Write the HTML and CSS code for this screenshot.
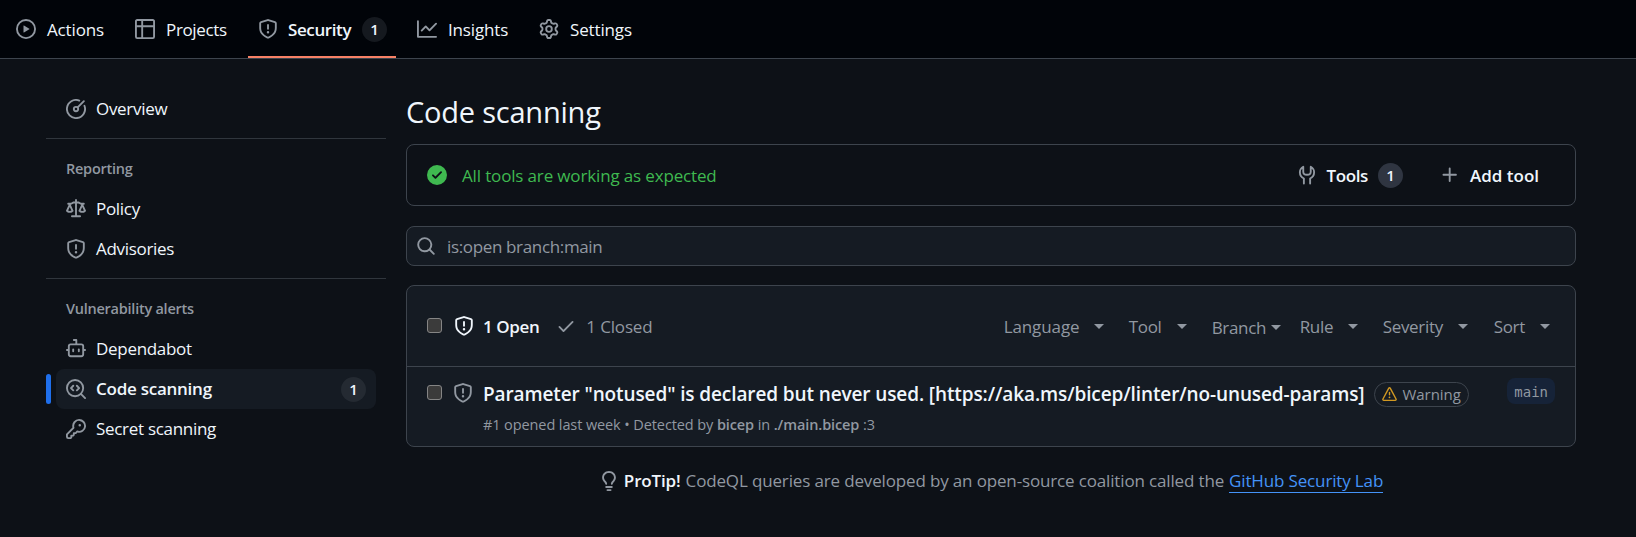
FILE: index.html
```html
<!DOCTYPE html>
<html lang="en">
<head>
<meta charset="utf-8">
<title>Code scanning</title>
<link rel="stylesheet" href="styles.css">
</head>
<body>
<svg class="sprite" aria-hidden="true">
  <symbol id="shield" viewBox="0 0 16 16"><path d="M7.467.133a1.748 1.748 0 0 1 1.066 0l5.25 1.68A1.75 1.75 0 0 1 15 3.48V7c0 1.566-.32 3.182-1.303 4.682-.983 1.498-2.585 2.813-5.032 3.855a1.697 1.697 0 0 1-1.33 0c-2.447-1.042-4.049-2.357-5.032-3.855C1.32 10.182 1 8.566 1 7V3.48a1.75 1.75 0 0 1 1.217-1.667Zm.61 1.429a.25.25 0 0 0-.153 0l-5.25 1.68a.25.25 0 0 0-.174.238V7c0 1.358.275 2.666 1.057 3.86.784 1.194 2.121 2.34 4.366 3.297a.196.196 0 0 0 .154 0c2.245-.956 3.582-2.104 4.366-3.298C13.225 9.666 13.5 8.36 13.5 7V3.48a.251.251 0 0 0-.174-.237l-5.25-1.68ZM8.75 4.75v3a.75.75 0 0 1-1.5 0v-3a.75.75 0 0 1 1.5 0ZM9 10.5a1 1 0 1 1-2 0 1 1 0 0 1 2 0Z"/></symbol>
</svg>
<header class="tabs">
  <a class="tab actions"><svg class="icon" viewBox="0 0 16 16"><path d="M8 0a8 8 0 1 1 0 16A8 8 0 0 1 8 0ZM1.5 8a6.5 6.5 0 1 0 13 0 6.5 6.5 0 0 0-13 0Zm4.879-2.773 4.264 2.559a.25.25 0 0 1 0 .428l-4.264 2.559A.25.25 0 0 1 6 10.559V5.442a.25.25 0 0 1 .379-.215Z"/></svg><span>Actions</span></a>
  <a class="tab projects"><svg class="icon" viewBox="0 0 16 16"><path d="M0 1.75C0 .784.784 0 1.75 0h12.5C15.216 0 16 .784 16 1.75v12.5A1.75 1.75 0 0 1 14.25 16H1.75A1.75 1.75 0 0 1 0 14.25ZM6.5 6.5v8h7.75a.25.25 0 0 0 .25-.25V6.5Zm8-1.5V1.75a.25.25 0 0 0-.25-.25H6.5V5Zm-13 1.5v7.75c0 .138.112.25.25.25H5v-8ZM5 5V1.5H1.75a.25.25 0 0 0-.25.25V5Z"/></svg><span>Projects</span></a>
  <a class="tab security selected"><svg class="icon"><use href="#shield"/></svg><span>Security</span><b class="count">1</b></a>
  <a class="tab insights"><svg class="icon" viewBox="0 0 16 16"><path d="M1.5 1.75V13.5h13.75a.75.75 0 0 1 0 1.5H.75a.75.75 0 0 1-.75-.75V1.75a.75.75 0 0 1 1.5 0Zm14.28 2.53-5.25 5.25a.75.75 0 0 1-1.06 0L7 7.06 4.28 9.78a.751.751 0 0 1-1.042-.018.751.751 0 0 1-.018-1.042l3.25-3.25a.75.75 0 0 1 1.06 0L10 7.94l4.72-4.72a.751.751 0 0 1 1.042.018.751.751 0 0 1 .018 1.042Z"/></svg><span>Insights</span></a>
  <a class="tab settings"><svg class="icon" viewBox="0 0 16 16"><path d="M8 0a8.2 8.2 0 0 1 .701.031C9.444.095 9.99.645 10.16 1.29l.288 1.107c.018.066.079.158.212.224.231.114.454.243.668.386.123.082.233.09.299.071l1.103-.303c.644-.176 1.392.021 1.82.63.27.385.506.792.704 1.218.315.675.111 1.422-.364 1.891l-.814.806c-.049.048-.098.147-.088.294.016.257.016.515 0 .772-.01.147.038.246.088.294l.814.806c.475.469.679 1.216.364 1.891a7.977 7.977 0 0 1-.704 1.217c-.428.61-1.176.807-1.82.63l-1.102-.302c-.067-.019-.177-.011-.3.071a5.909 5.909 0 0 1-.668.386c-.133.066-.194.158-.211.224l-.29 1.106c-.168.646-.715 1.196-1.458 1.26a8.006 8.006 0 0 1-1.402 0c-.743-.064-1.289-.614-1.458-1.26l-.289-1.106c-.018-.066-.079-.158-.212-.224a5.738 5.738 0 0 1-.668-.386c-.123-.082-.233-.09-.299-.071l-1.103.303c-.644.176-1.392-.021-1.82-.63a8.12 8.12 0 0 1-.704-1.218c-.315-.675-.111-1.422.363-1.891l.815-.806c.05-.048.098-.147.088-.294a6.214 6.214 0 0 1 0-.772c.01-.147-.038-.246-.088-.294l-.815-.806C.635 6.045.431 5.298.746 4.623a7.92 7.92 0 0 1 .704-1.217c.428-.61 1.176-.807 1.82-.63l1.102.302c.067.019.177.011.3-.071.214-.143.437-.272.668-.386.133-.066.194-.158.211-.224l.29-1.106C6.009.645 6.556.095 7.299.03 7.53.01 7.764 0 8 0Zm-.571 1.525c-.036.003-.108.036-.137.146l-.289 1.105c-.147.561-.549.967-.998 1.189-.173.086-.34.183-.5.29-.417.278-.97.423-1.529.27l-1.103-.303c-.109-.03-.175.016-.195.045-.22.312-.412.644-.573.99-.014.031-.021.11.059.19l.815.806c.411.406.562.957.53 1.456a4.709 4.709 0 0 0 0 .582c.032.499-.119 1.05-.53 1.456l-.815.806c-.081.08-.073.159-.059.19.162.346.353.677.573.989.02.03.085.076.195.046l1.102-.303c.56-.153 1.113-.008 1.53.27.161.107.328.204.501.29.447.222.85.629.997 1.189l.289 1.105c.029.109.101.143.137.146a6.6 6.6 0 0 0 1.142 0c.036-.003.108-.036.137-.146l.289-1.105c.147-.561.549-.967.998-1.189.173-.086.34-.183.5-.29.417-.278.97-.423 1.529-.27l1.103.303c.109.029.175-.016.195-.045.22-.313.411-.644.573-.99.014-.031.021-.11-.059-.19l-.815-.806c-.411-.406-.562-.957-.53-1.456a4.709 4.709 0 0 0 0-.582c-.032-.499.119-1.05.53-1.456l.815-.806c.081-.08.073-.159.059-.19a6.464 6.464 0 0 0-.573-.989c-.02-.03-.085-.076-.195-.046l-1.102.303c-.56.153-1.113.008-1.53-.27a4.44 4.44 0 0 0-.501-.29c-.447-.222-.85-.629-.997-1.189l-.289-1.105c-.029-.11-.101-.143-.137-.146a6.6 6.6 0 0 0-1.142 0ZM11 8a3 3 0 1 1-6 0 3 3 0 0 1 6 0ZM9.5 8a1.5 1.5 0 1 0-3.001.001A1.5 1.5 0 0 0 9.5 8Z"/></svg><span>Settings</span></a>
</header>
<div class="layout">
  <nav class="sidebar">
    <a class="nav-item"><svg class="icon line" viewBox="0 0 16 16"><path d="M10.6 1.25A7.25 7.25 0 1 0 14.75 5.4"/><circle cx="8" cy="8" r="1.75"/><path d="M9.3 6.7 14.3 1.7"/></svg><span>Overview</span></a>
    <hr class="rule">
    <h2 class="group">Reporting</h2>
    <a class="nav-item"><svg class="icon" viewBox="0 0 16 16"><path d="M8.75.75V2h.985c.304 0 .603.08.867.231l1.29.736c.038.022.08.033.124.033h2.234a.75.75 0 0 1 0 1.5h-.427l2.111 4.692a.75.75 0 0 1-.154.838l-.53-.53.529.531-.001.002-.002.002-.006.006-.006.005-.01.01-.045.04c-.21.176-.441.327-.686.45C14.556 10.78 13.88 11 13 11a4.498 4.498 0 0 1-2.023-.454 3.544 3.544 0 0 1-.686-.45l-.045-.04-.016-.015-.006-.006-.004-.004v-.001a.75.75 0 0 1-.154-.838L12.178 4.5h-.162c-.305 0-.604-.079-.868-.231l-1.29-.736a.245.245 0 0 0-.124-.033H8.75V13h2.5a.75.75 0 0 1 0 1.5h-6.5a.75.75 0 0 1 0-1.5h2.5V3.5h-.984a.245.245 0 0 0-.124.033l-1.289.737c-.265.15-.564.23-.869.23h-.162l2.112 4.692a.75.75 0 0 1-.154.838l-.53-.53.529.531-.001.002-.002.002-.006.006-.016.015-.045.04c-.21.176-.441.327-.686.45C4.556 10.78 3.88 11 3 11a4.498 4.498 0 0 1-2.023-.454 3.544 3.544 0 0 1-.686-.45l-.045-.04-.016-.015-.006-.006-.004-.004v-.001a.75.75 0 0 1-.154-.838L2.178 4.5H1.75a.75.75 0 0 1 0-1.5h2.234a.249.249 0 0 0 .125-.033l1.288-.737c.265-.15.564-.23.869-.23h.984V.75a.75.75 0 0 1 1.5 0Zm2.945 8.477c.285.135.718.273 1.305.273s1.02-.138 1.305-.273L13 6.327Zm-10 0c.285.135.718.273 1.305.273s1.02-.138 1.305-.273L3 6.327Z"/></svg><span>Policy</span></a>
    <a class="nav-item"><svg class="icon"><use href="#shield"/></svg><span>Advisories</span></a>
    <hr class="rule">
    <h2 class="group">Vulnerability alerts</h2>
    <a class="nav-item"><svg class="icon" viewBox="0 0 16 16"><path d="M5.75 7.5a.75.75 0 0 1 .75.75v1.5a.75.75 0 0 1-1.5 0v-1.5a.75.75 0 0 1 .75-.75Zm5.25.75a.75.75 0 0 0-1.5 0v1.5a.75.75 0 0 0 1.5 0v-1.5ZM6.25 0h2A.75.75 0 0 1 9 .75V3.5h3.25a2.25 2.25 0 0 1 2.25 2.25V8h.75a.75.75 0 0 1 0 1.5h-.75v2.75a2.25 2.25 0 0 1-2.25 2.25h-8.5a2.25 2.25 0 0 1-2.25-2.25V9.5H.75a.75.75 0 0 1 0-1.5h.75V5.75A2.25 2.25 0 0 1 3.75 3.5H7.5v-2H6.25a.75.75 0 0 1 0-1.5ZM3 5.75v6.5c0 .414.336.75.75.75h8.5a.75.75 0 0 0 .75-.75v-6.5a.75.75 0 0 0-.75-.75h-8.5a.75.75 0 0 0-.75.75Z"/></svg><span>Dependabot</span></a>
    <a class="nav-item current"><svg class="icon line" viewBox="0 0 16 16"><circle cx="7.25" cy="7.25" r="6.5"/><path d="m11.9 11.9 3.35 3.35M5.8 5.4 4 7.25 5.800 9.100M8.700 5.400 10.500 7.250 8.700 9.100"/></svg><span>Code scanning</span><b class="count">1</b></a>
    <a class="nav-item"><svg class="icon" viewBox="0 0 16 16"><path d="M10.5 0a5.499 5.499 0 1 1-1.288 10.848l-.932.932a.749.749 0 0 1-.53.22H7v.75a.749.749 0 0 1-.22.53l-.5.5a.749.749 0 0 1-.53.22H5v.75a.749.749 0 0 1-.22.53l-.5.5a.749.749 0 0 1-.53.22h-2A1.75 1.75 0 0 1 0 14.25v-2c0-.199.079-.389.22-.53l4.932-4.932A5.5 5.5 0 0 1 10.5 0Zm-4 5.5c-.001.431.069.86.205 1.269a.75.75 0 0 1-.181.768L1.5 12.56v1.69c0 .138.112.25.25.25h1.69l.06-.06v-1.19a.75.75 0 0 1 .75-.75h1.19l.06-.06v-1.19a.75.75 0 0 1 .75-.75h1.19l1.023-1.025a.75.75 0 0 1 .768-.18A4 4 0 1 0 6.5 5.5ZM11 6a1 1 0 1 1 0-2 1 1 0 0 1 0 2Z"/></svg><span>Secret scanning</span></a>
  </nav>
  <main class="main">
    <h1 class="title">Code scanning</h1>
    <section class="status">
      <svg class="icon ok" viewBox="0 0 16 16"><path d="M8 16A8 8 0 1 1 8 0a8 8 0 0 1 0 16Zm3.78-9.72a.751.751 0 0 0-.018-1.042.751.751 0 0 0-1.042-.018L6.75 9.19 5.28 7.72a.751.751 0 0 0-1.042.018.751.751 0 0 0-.018 1.042l2 2a.75.75 0 0 0 1.06 0Z"/></svg>
      <span class="status-text">All tools are working as expected</span>
      <a class="action tools"><svg class="icon line" viewBox="0 0 16 16"><path d="M5.500 14.800v-4C3.500 9.800 2.300 8.100 2.300 5.800c0-1.900 1-3.400 2.700-4.400v3.900c0 1.600 1.300 2.500 3 2.500s3-.900 3-2.500V1.400c1.700 1 2.700 2.500 2.700 4.400 0 2.300-1.200 4-3.200 5v4"/></svg><span>Tools</span><b class="count">1</b></a>
      <a class="action add"><svg class="icon" viewBox="0 0 16 16"><path d="M7.75 2a.75.75 0 0 1 .75.75V7h4.25a.75.75 0 0 1 0 1.5H8.5v4.25a.75.75 0 0 1-1.5 0V8.5H2.75a.75.75 0 0 1 0-1.5H7V2.75A.75.75 0 0 1 7.75 2Z"/></svg><span>Add tool</span></a>
    </section>
    <div class="search"><svg class="icon" viewBox="0 0 16 16"><path d="M10.68 11.74a6 6 0 0 1-7.922-8.982 6 6 0 0 1 8.982 7.922l3.04 3.04a.749.749 0 0 1-.326 1.275.749.749 0 0 1-.734-.215ZM11.5 7a4.499 4.499 0 1 0-8.997 0A4.499 4.499 0 0 0 11.5 7Z"/></svg><span>is:open branch:main</span></div>
    <section class="alerts">
      <div class="alerts-head">
        <i class="box"></i>
        <svg class="icon bright"><use href="#shield"/></svg><span class="open">1 Open</span>
        <svg class="icon check" viewBox="0 0 16 16"><path d="M13.78 4.22a.75.75 0 0 1 0 1.06l-7.25 7.25a.75.75 0 0 1-1.060 0L2.220 9.280a.751.751 0 0 1 .018-1.042.751.751 0 0 1 1.042-.018L6 10.940l6.720-6.720a.75.75 0 0 1 1.060 0Z"/></svg><span class="closed">1 Closed</span>
        <div class="filters">
          <span class="filter f-language">Language</span><span class="filter f-tool">Tool</span><span class="filter f-branch">Branch</span><span class="filter f-rule">Rule</span><span class="filter f-severity">Severity</span><span class="filter f-sort">Sort</span>
        </div>
      </div>
      <div class="alert">
        <i class="box"></i>
        <svg class="icon"><use href="#shield"/></svg>
        <div class="alert-body">
          <div class="alert-line"><a class="alert-title">Parameter "notused" is declared but never used. [https://aka.ms/bicep/linter/no-unused-params]</a><span class="warning"><svg viewBox="0 0 16 16"><path d="M6.457 1.047c.659-1.234 2.427-1.234 3.086 0l6.082 11.378A1.75 1.75 0 0 1 14.082 15H1.918a1.75 1.75 0 0 1-1.543-2.575Zm1.763.707a.25.25 0 0 0-.44 0L1.698 13.132a.25.25 0 0 0 .22.368h12.164a.25.25 0 0 0 .22-.368Zm.53 3.996v2.5a.75.75 0 0 1-1.500 0v-2.500a.75.75 0 0 1 1.500 0ZM9 11a1 1 0 1 1-2 0 1 1 0 0 1 2 0Z"/></svg><span>Warning</span></span></div>
          <div class="meta">#1 opened last week • Detected by <b>bicep</b> in <b>./main.bicep</b> :3</div>
        </div>
        <span class="branch">main</span>
      </div>
    </section>
    <p class="protip"><svg class="icon" viewBox="0 0 16 16"><path d="M8 1.5c-2.363 0-4 1.69-4 3.75 0 .984.424 1.625.984 2.304l.214.253c.223.264.47.556.673.848.284.411.537.896.621 1.49a.75.75 0 0 1-1.484.211c-.04-.282-.163-.547-.37-.847a8.456 8.456 0 0 0-.542-.68c-.084-.1-.173-.205-.268-.32C3.201 7.75 2.5 6.766 2.5 5.25 2.5 2.31 4.863 0 8 0s5.5 2.31 5.5 5.25c0 1.516-.701 2.5-1.328 3.259-.095.115-.184.22-.268.319-.207.245-.383.453-.541.681-.208.3-.33.565-.37.847a.751.751 0 0 1-1.485-.212c.084-.593.337-1.078.621-1.489.203-.292.45-.584.673-.848.075-.088.147-.173.213-.253.561-.679.985-1.32.985-2.304 0-2.06-1.637-3.75-4-3.75ZM5.75 12h4.5a.75.75 0 0 1 0 1.5h-4.5a.75.75 0 0 1 0-1.5ZM6 15.25a.75.75 0 0 1 .75-.75h2.5a.75.75 0 0 1 0 1.5h-2.5a.75.75 0 0 1-.75-.75Z"/></svg><b>ProTip!</b><span class="tip-text">CodeQL queries are developed by an open-source coalition called the</span><a class="tip-link">GitHub Security Lab</a></p>
  </main>
</div>
</body>
</html>
```
FILE: styles.css
```css
* { box-sizing: border-box; }
body {
  margin: 0;
  height: 537px;
  overflow: hidden;
  background: #0d1117;
  color: #f0f6fc;
  font: 17px/24px "Open Sans", "Noto Sans", sans-serif;
  letter-spacing: -0.15px;
  white-space: nowrap;
}
.sprite { position: absolute; width: 0; height: 0; }
.icon { width: 20px; height: 20px; flex: none; fill: #9198a1; }
.line { fill: none; stroke: #9198a1; stroke-width: 1.5; stroke-linecap: round; stroke-linejoin: round; }
b { font-weight: 600; }
.count {
  flex: none;
  width: 25px;
  height: 25px;
  border-radius: 50%;
  background: #15191f;
  font-size: 15px;
  line-height: 25px;
  letter-spacing: 0;
  text-align: center;
}

.tabs { display: flex; height: 59px; padding-left: 6px; background: #010409; border-bottom: 1px solid #3d444d; }
.tab { display: flex; align-items: center; height: 58px; padding: 0 10px; }
.tab span { margin-left: 11px; padding-top: 2px; }
.actions { width: 119px; }
.projects { width: 123px; letter-spacing: -0.35px; }
.security { width: 148px; letter-spacing: -0.4px; }
.insights { width: 122px; margin-left: 10px; padding-left: 11px; }
.settings { padding-left: 11px; }
.selected { font-weight: 600; box-shadow: inset 0 -2px #f78166; }
.security span { margin-left: 10px; }
.security .count { margin-left: auto; }
.security { padding-right: 9px; }

.layout { display: flex; padding-left: 46px; }
.sidebar { width: 340px; padding-top: 30px; letter-spacing: -0.3px; }
.nav-item { display: flex; align-items: center; height: 40px; width: 320px; margin-left: 10px; padding: 0 10px; border-radius: 8px; }
.nav-item span { margin-left: 10px; }
.rule { height: 1px; margin: 9px 0 18px; border: 0; background: #30363d; }
.group { height: 24px; margin: 0 0 8px 20px; color: #9198a1; font-size: 14.5px; line-height: 24px; letter-spacing: -0.25px; font-weight: 600; }
.current { position: relative; background: #151b23; font-weight: 600; letter-spacing: -0.25px; }
.current::before { content: ""; position: absolute; left: -10px; top: 5px; width: 5px; height: 30px; border-radius: 5px; background: #1f6feb; }
.current .count { margin-left: auto; background: #242a32; }

.main { width: 1170px; margin-left: 20px; }
.title { height: 40px; margin: 33px 0 12px; font-size: 29px; line-height: 40px; letter-spacing: -0.22px; font-weight: 400; }
.status { display: flex; align-items: center; height: 62px; padding: 0 36px 0 20px; border: 1px solid #3d444d; border-radius: 8px; }
.status > span, .action > span { padding-top: 2px; }
.ok { fill: #3fb950; }
.status-text { margin-left: 15px; color: #3fb950; }
.action { display: flex; align-items: center; font-weight: 600; }
.tools { margin-left: auto; letter-spacing: -0.4px; }
.action span { margin-left: 10px; }
.tools .count { margin-left: 10px; background: #2f3541; }
.add { margin-left: 37px; letter-spacing: 0; }
.search { display: flex; align-items: center; height: 40px; margin-top: 20px; padding-left: 9px; border: 1px solid #3d444d; border-radius: 8px; background: #151b23; color: #9198a1; letter-spacing: -0.35px; }
.search span { margin-left: 11px; padding-top: 1px; }

.alerts { height: 162px; margin-top: 19px; border: 1px solid #3d444d; border-radius: 8px; background: #151b23; }
.alerts-head { display: flex; align-items: center; height: 81px; padding: 0 25px 0 20px; border-bottom: 1px solid #3d444d; color: #9198a1; }
.box { width: 15px; height: 15px; flex: none; border: 1px solid #858585; border-radius: 3px; background: #3b3b3b; }
.alerts-head .box { margin-bottom: 2px; }
.alerts-head .icon { margin-left: 12px; }
.alerts-head .bright { fill: #f0f6fc; }
.open { margin-left: 9px; padding-top: 1px; color: #f0f6fc; font-weight: 600; letter-spacing: -0.4px; }
.alerts-head .check { margin-left: 17px; }
.closed { margin-left: 10px; padding-top: 1px; }
.filters { display: flex; margin-left: auto; padding-top: 1px; letter-spacing: -0.3px; }
.filter { display: flex; align-items: center; }
.filter::after { content: ""; margin-left: 15px; border: 5px solid transparent; border-top-color: #9198a1; border-bottom: 0; }
.f-language { width: 125px; letter-spacing: -0.1px; }
.f-tool { width: 83px; }
.f-branch { width: 88px; padding-top: 2px; }
.f-branch::after { margin-left: 5px; }
.f-rule { width: 83px; }
.f-severity { width: 111px; }
.alert { display: flex; padding: 0 20px; }
.alert > .box { margin-top: 18px; }
.alert > .icon { margin: 16px 0 0 11px; }
.alert-body { margin-left: 10px; padding-top: 12px; }
.alert-line { display: flex; align-items: center; height: 30px; }
.alert-title { font-size: 19px; font-weight: 600; letter-spacing: -0.11px; }
.warning { display: flex; align-items: center; height: 25px; margin-left: 10px; padding: 0 7px; border: 1px solid #3d444d; border-radius: 13px; color: #9198a1; font-size: 15px; font-weight: 500; letter-spacing: -0.05px; }
.warning svg { width: 15px; height: 15px; margin-right: 5px; fill: #d29922; }
.meta { height: 24px; margin-top: 4px; color: #9198a1; font-size: 14.5px; line-height: 24px; letter-spacing: -0.1px; }
.branch { height: 26px; margin: 11px 0 0 auto; padding: 0 7px; border-radius: 8px; background: #162338; color: #9198a1; font: 14px/29px "DejaVu Sans Mono", monospace; letter-spacing: 0; }
.protip { display: flex; align-items: center; justify-content: center; height: 24px; margin: 22px 0 0; color: #9198a1; }
.protip b { margin-left: 5px; color: #f0f6fc; }
.tip-text, .tip-link { margin-left: 5px; }
.tip-link { height: 24px; color: #4493f8; border-bottom: 1px solid #4493f8; }
```
